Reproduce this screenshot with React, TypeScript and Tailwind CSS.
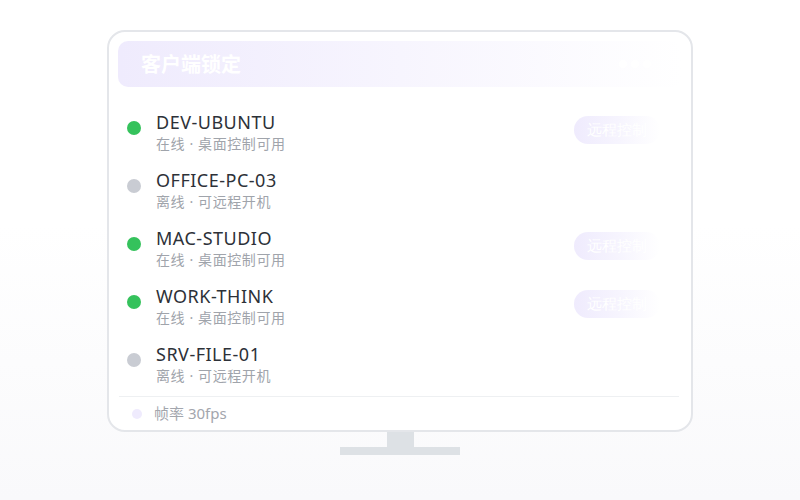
const hosts = [
  { name: "DEV-UBUNTU", online: true },
  { name: "OFFICE-PC-03", online: false },
  { name: "MAC-STUDIO", online: true },
  { name: "WORK-THINK", online: true },
  { name: "SRV-FILE-01", online: false },
];

function HostRow({ name, online }: { name: string; online: boolean }) {
  return (
    <div className="h-[58px] flex items-start pt-[11px] pl-[9px] pr-[22px]">
      <span
        className={
          online
            ? "mt-[11px] w-[14px] h-[14px] rounded-full bg-[#35c25c] shrink-0"
            : "mt-[11px] w-[14px] h-[14px] rounded-full bg-[#c9ccd3] shrink-0"
        }
      />
      <div className="ml-[15px] flex flex-col">
        <span className="text-[18px] leading-[24px] tracking-[0.5px] text-[#2d3138]">{name}</span>
        <span className="text-[14px] leading-[20px] tracking-[0.6px] text-[#a0a4ab]">
          {online ? "在线 · 桌面控制可用" : "离线 · 可远程开机"}
        </span>
      </div>
      {online && (
        <span className="ml-auto mt-[6px] h-[28px] px-[13px] flex items-center rounded-full bg-gradient-to-r from-[#efebfd] via-[#f6f4fe] to-white text-[15px] text-white font-['Liberation_Serif',serif]">
          远程控制
        </span>
      )}
    </div>
  );
}

export default function App() {
  return (
    <div className="w-[800px] h-[500px] flex flex-col items-center pt-[30px] bg-gradient-to-b from-white from-45% to-[#f9f9fb] font-['Noto_Sans','Noto_Sans_CJK_SC',sans-serif]">
      <div className="w-[586px] h-[402px] border-2 border-[#e4e6ea] rounded-[18px] bg-white px-[9px] pt-[9px] flex flex-col">
        <div className="h-[46px] shrink-0 rounded-[10px] bg-gradient-to-r from-[#efebfd] via-[#f7f5fe] to-white px-[23px] flex items-center justify-between">
          <span className="text-[20px] font-bold text-white font-['Noto_Sans_CJK_SC',sans-serif]">
            客户端锁定
          </span>
          <span className="flex gap-[4px] mr-[8px]">
            <span className="w-[8px] h-[8px] rounded-full bg-white" />
            <span className="w-[8px] h-[8px] rounded-full bg-white" />
            <span className="w-[8px] h-[8px] rounded-full bg-white" />
          </span>
        </div>
        <div className="mt-[12px] flex flex-col">
          {hosts.map((h) => (
            <HostRow key={h.name} name={h.name} online={h.online} />
          ))}
        </div>
        <div className="mt-[7px] ml-[1px] mr-[3px] border-t border-[#eef0f2]" />
        <div className="h-[33px] flex items-center pl-[14px]">
          <span className="w-[10px] h-[10px] rounded-full bg-[#efebfd]" />
          <span className="ml-[12px] text-[15px] text-[#a3a6ad]">帧率 30fps</span>
        </div>
      </div>
      <div className="w-[27px] h-[15px] bg-[#dde1e5]" />
      <div className="w-[120px] h-[8px] bg-[#dde1e5]" />
    </div>
  );
}
